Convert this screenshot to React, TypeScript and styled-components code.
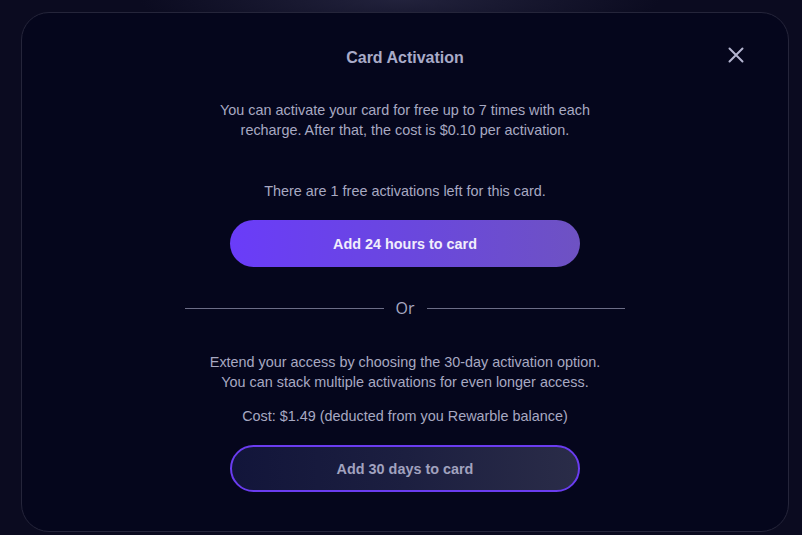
import React from "react";
import styled, { createGlobalStyle } from "styled-components";

const Global = createGlobalStyle`
  html, body { margin: 0; padding: 0; }
  body {
    width: 802px;
    height: 535px;
    overflow: hidden;
    background: radial-gradient(ellipse 260px 40px at 400px 0px, #22223c 0%, rgba(10,10,32,0) 100%), #0b0b20;
    font-family: "Liberation Sans", Arial, sans-serif;
  }
`;

const Page = styled.div`
  width: 802px;
  height: 535px;
  padding: 12px 13px 3px 21px;
  box-sizing: border-box;
`;

const Modal = styled.div`
  position: relative;
  width: 768px;
  height: 520px;
  box-sizing: border-box;
  border: 1px solid #25253a;
  border-radius: 28px;
  background: #05061c;
  display: flex;
  flex-direction: column;
  align-items: center;
  padding-top: 34px;
`;

const Title = styled.h2`
  margin: 0;
  font-size: 16px;
  font-weight: 700;
  line-height: 22px;
  color: #a9abc8;
`;

const Close = styled.button`
  position: absolute;
  top: 32px;
  right: 42px;
  width: 20px;
  height: 20px;
  padding: 0;
  border: none;
  background: transparent;
  display: flex;
  align-items: center;
  justify-content: center;
  cursor: pointer;
`;

const Text = styled.p<{ $top: number }>`
  margin: ${(p) => p.$top}px 0 0;
  font-size: 14.4px;
  line-height: 20px;
  color: #a8a9c2;
  text-align: center;
`;

const PrimaryButton = styled.button`
  margin-top: 19px;
  width: 350px;
  height: 47px;
  border: none;
  border-radius: 24px;
  background: linear-gradient(90deg, #6a3cf9 0%, #6a48dc 55%, #6e52c3 100%);
  color: #f1eefc;
  font-family: "Liberation Sans", Arial, sans-serif;
  font-size: 14.4px;
  font-weight: 700;
  cursor: pointer;
`;

const Divider = styled.div`
  margin-top: 31px;
  width: 440px;
  display: flex;
  align-items: center;
  gap: 12px;
`;

const Line = styled.div`
  flex: 1;
  height: 1px;
  background: #6c6d86;
`;

const Or = styled.span`
  font-family: "Open Sans", sans-serif;
  font-size: 16px;
  line-height: 20px;
  color: #a8a9c2;
`;

const SecondaryButton = styled.button`
  margin-top: 19px;
  width: 350px;
  height: 47px;
  box-sizing: border-box;
  border: 2px solid #6a3cf0;
  border-radius: 24px;
  background: linear-gradient(90deg, #12153a 0%, #1c1f40 50%, #2a2c48 100%);
  color: #a1a2bf;
  font-family: "Liberation Sans", Arial, sans-serif;
  font-size: 14.4px;
  font-weight: 700;
  cursor: pointer;
`;

export default function App() {
  return (
    <>
      <Global />
      <Page>
        <Modal>
          <Title>Card Activation</Title>
          <Close aria-label="Close">
            <svg width="16" height="16" viewBox="0 0 16 16">
              <path d="M1.5 1.5 L14.5 14.5 M14.5 1.5 L1.5 14.5" stroke="#b4b5d0" strokeWidth="2" strokeLinecap="round" />
            </svg>
          </Close>
          <Text $top={31}>
            You can activate your card for free up to 7 times with each
            <br />
            recharge. After that, the cost is $0.10 per activation.
          </Text>
          <Text $top={41}>There are 1 free activations left for this card.</Text>
          <PrimaryButton>Add 24 hours to card</PrimaryButton>
          <Divider>
            <Line />
            <Or>Or</Or>
            <Line />
          </Divider>
          <Text $top={34}>
            Extend your access by choosing the 30-day activation option.
            <br />
            You can stack multiple activations for even longer access.
          </Text>
          <Text $top={14}>Cost: $1.49 (deducted from you Rewarble balance)</Text>
          <SecondaryButton>Add 30 days to card</SecondaryButton>
        </Modal>
      </Page>
    </>
  );
}
